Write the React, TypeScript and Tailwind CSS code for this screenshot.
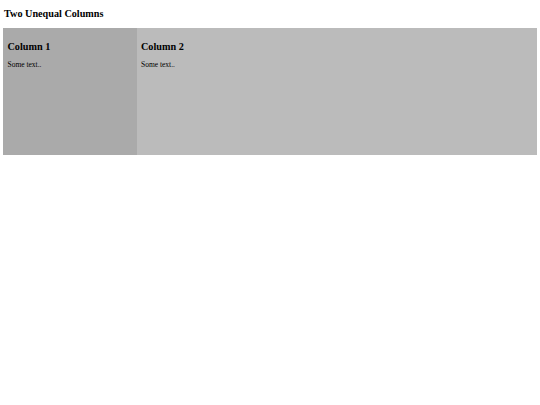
export default function App() {
  return (
    <div className="min-h-[405px] bg-white px-[3px] font-['Liberation_Serif',serif] text-black">
      <h2 className="pt-[7px] pl-px text-[10.2px] font-bold leading-[14px]">Two Unequal Columns</h2>
      <div className="mt-[7px] flex h-[127px]">
        <div className="w-1/4 bg-[#aaaaaa] px-[4.5px] py-[4px]">
          <h2 className="mt-[9px] text-[10.2px] font-bold leading-[12px]">Column 1</h2>
          <p className="mt-[8px] text-[7.5px] leading-[8px]">Some text..</p>
        </div>
        <div className="w-3/4 bg-[#bbbbbb] px-[4.5px] py-[4px]">
          <h2 className="mt-[9px] text-[10.2px] font-bold leading-[12px]">Column 2</h2>
          <p className="mt-[8px] text-[7.5px] leading-[8px]">Some text..</p>
        </div>
      </div>
    </div>
  );
}
